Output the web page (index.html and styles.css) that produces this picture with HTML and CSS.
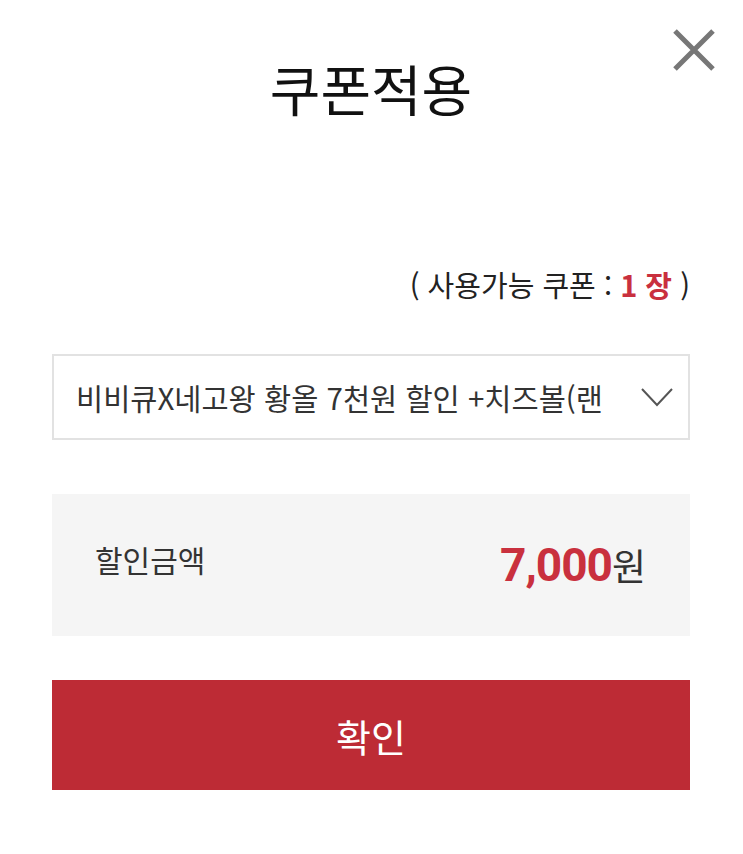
FILE: index.html
```html
<!DOCTYPE html>
<html lang="ko">
<head>
    <meta charset="UTF-8">
    <meta name="viewport" content="width=device-width, initial-scale=1.0">
    <title>쿠폰적용</title>
    <link rel="stylesheet" href="styles.css">
</head>
<body>
    <div class="popup">
        <div class="header">
            <h1 class="title">쿠폰적용</h1>
            <button class="close" aria-label="닫기">
                <svg width="46" height="46" viewBox="0 0 46 46">
                    <path d="M4 4 L42 42 M42 4 L4 42" stroke="#777" stroke-width="5" fill="none"/>
                </svg>
            </button>
        </div>

        <p class="count">( 사용가능 쿠폰 : <span class="red">1 장</span> )</p>

        <div class="select">
            <span class="select-text">비비큐X네고왕 황올 7천원 할인 +치즈볼(랜덤)</span>
            <svg class="chevron" width="34" height="22" viewBox="0 0 34 22">
                <path d="M2 3 L17 19 L32 3" stroke="#555" stroke-width="2" fill="none"/>
            </svg>
        </div>

        <div class="summary">
            <span class="label">할인금액</span>
            <span class="price"><b>7,000</b>원</span>
        </div>

        <button class="confirm">확인</button>
    </div>
</body>
</html>
```

FILE: styles.css
```css
/* Reset */
* {
    margin: 0;
    padding: 0;
    box-sizing: border-box;
}

body {
    font-family: "Noto Sans CJK KR", "Noto Sans", sans-serif;
    background: #fff;
    color: #222;
}

.popup {
    padding: 0 53px 0 52px;
}

/* Header */
.header {
    position: relative;
    padding-top: 54px;
    text-align: center;
}

.title {
    font-size: 55px;
    font-weight: 400;
    line-height: 66px;
    color: #111;
}

.close {
    position: absolute;
    top: 27px;
    right: -27px;
    border: none;
    background: none;
    cursor: pointer;
}

.close svg {
    display: block;
}

/* Coupon count */
.count {
    margin-top: 143px;
    text-align: right;
    font-size: 29px;
    line-height: 42px;
    color: #222;
}

.red {
    color: #c9303e;
    font-weight: 700;
}

/* Select box */
.select {
    margin-top: 49px;
    height: 86px;
    border: 2px solid #e2e2e2;
    display: flex;
    align-items: center;
    padding: 0 14px 0 22px;
    gap: 38px;
}

.select-text {
    flex: 1;
    font-size: 29.5px;
    color: #333;
    white-space: nowrap;
    overflow: hidden;
}

.chevron {
    flex-shrink: 0;
}

/* Discount summary */
.summary {
    margin-top: 54px;
    height: 142px;
    background: #f5f5f5;
    display: flex;
    justify-content: space-between;
    align-items: center;
    padding: 0 44px 0 43px;
}

.label {
    font-size: 30px;
    color: #333;
    margin-top: -12px;
}

.price {
    font-size: 37px;
    color: #333;
}

.price b {
    font-family: Roboto, "Noto Sans CJK KR", sans-serif;
    font-size: 46px;
    color: #c9303e;
    font-weight: 700;
    letter-spacing: -1px;
}

/* Confirm button */
.confirm {
    display: block;
    width: 100%;
    margin-top: 44px;
    height: 110px;
    border: none;
    background: #bd2b35;
    color: #fff;
    font-family: inherit;
    font-size: 38px;
    cursor: pointer;
}
```
